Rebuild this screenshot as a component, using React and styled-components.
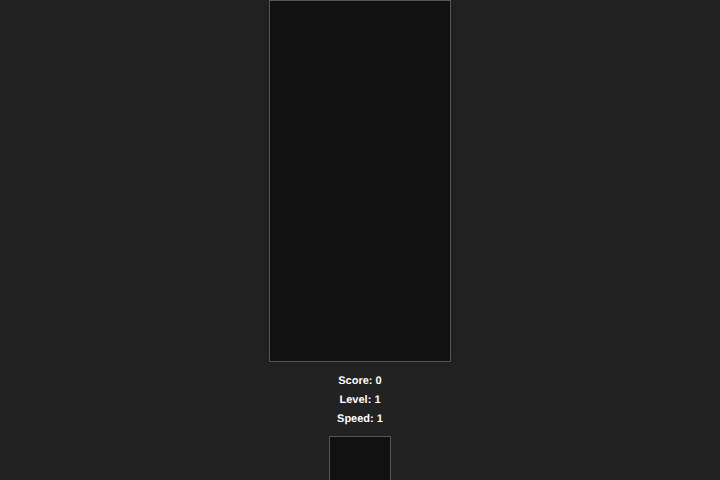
import styled, { createGlobalStyle } from "styled-components";

const stats = [
  { label: "Score", value: 0 },
  { label: "Level", value: 1 },
  { label: "Speed", value: 1 },
];

export default function App() {
  return (
    <>
      <GlobalStyle />
      <Game>
        <Board width={180} height={360} $shadow aria-label="Board" />
        <Stats>
          {stats.map(({ label, value }) => (
            <Stat key={label}>
              {label}: {value}
            </Stat>
          ))}
        </Stats>
        <Board width={60} height={60} aria-label="Next piece" />
      </Game>
    </>
  );
}

const GlobalStyle = createGlobalStyle`
  body {
    margin: 0;
    height: 100vh;
    overflow: hidden;
    background: #222;
    color: #fff;
    font-family: "Liberation Sans", Arial, sans-serif;
    text-rendering: geometricPrecision;
  }
`;

const Game = styled.main`
  display: flex;
  flex-direction: column;
  align-items: center;
`;

const Board = styled.canvas`
  background: #111;
  border: 1px solid #555;
  box-shadow: ${({ $shadow }) => ($shadow ? "0 0 10px rgba(0, 0, 0, 0.2)" : "none")};
`;

const Stats = styled.div`
  padding: 10px 0 7px;
  text-align: center;
  font-size: 11px;
  font-weight: 700;
`;

const Stat = styled.p`
  margin: 0;
  line-height: 19px;
`;
